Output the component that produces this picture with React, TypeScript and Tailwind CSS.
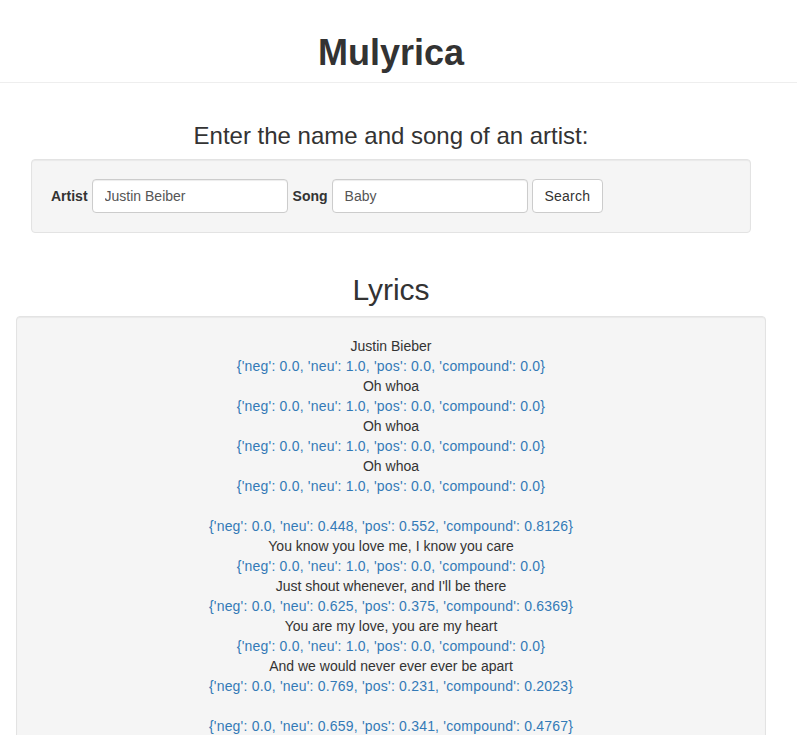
import React from 'react';

const lines: { text: string; score?: boolean }[] = [
  { text: 'Justin Bieber' },
  { text: "{'neg': 0.0, 'neu': 1.0, 'pos': 0.0, 'compound': 0.0}", score: true },
  { text: 'Oh whoa' },
  { text: "{'neg': 0.0, 'neu': 1.0, 'pos': 0.0, 'compound': 0.0}", score: true },
  { text: 'Oh whoa' },
  { text: "{'neg': 0.0, 'neu': 1.0, 'pos': 0.0, 'compound': 0.0}", score: true },
  { text: 'Oh whoa' },
  { text: "{'neg': 0.0, 'neu': 1.0, 'pos': 0.0, 'compound': 0.0}", score: true },
  { text: '' },
  { text: "{'neg': 0.0, 'neu': 0.448, 'pos': 0.552, 'compound': 0.8126}", score: true },
  { text: 'You know you love me, I know you care' },
  { text: "{'neg': 0.0, 'neu': 1.0, 'pos': 0.0, 'compound': 0.0}", score: true },
  { text: "Just shout whenever, and I'll be there" },
  { text: "{'neg': 0.0, 'neu': 0.625, 'pos': 0.375, 'compound': 0.6369}", score: true },
  { text: 'You are my love, you are my heart' },
  { text: "{'neg': 0.0, 'neu': 1.0, 'pos': 0.0, 'compound': 0.0}", score: true },
  { text: 'And we would never ever ever be apart' },
  { text: "{'neg': 0.0, 'neu': 0.769, 'pos': 0.231, 'compound': 0.2023}", score: true },
  { text: '' },
  { text: "{'neg': 0.0, 'neu': 0.659, 'pos': 0.341, 'compound': 0.4767}", score: true },
];

const inputCls =
  'w-[196px] h-[34px] px-[12px] border border-[#ccc] rounded-[4px] text-[#555] bg-white shadow-[inset_0_1px_1px_rgba(0,0,0,0.075)] outline-none';

export default function App() {
  return (
    <div className="min-h-screen bg-white text-[14px] leading-[20px] text-[#333] font-['Liberation_Sans',Arial,sans-serif]">
      <header className="pt-[33px] pb-[9px] border-b border-[#eee]">
        <div className="w-[782px]">
          <h1 className="text-center text-[36px] leading-[40px] font-bold">Mulyrica</h1>
        </div>
      </header>

      <div className="w-[782px]">
        <div className="w-[750px] mx-auto">
          <div className="px-[15px]">
            <h3 className="mt-[40px] mb-[10px] text-center text-[24px] leading-[26px]">
              Enter the name and song of an artist:
            </h3>
            <div className="mb-[20px] p-[19px] bg-[#f5f5f5] border border-[#e3e3e3] rounded-[4px] shadow-[inset_0_1px_1px_rgba(0,0,0,0.05)]">
              <form className="flex items-center gap-[4px]" onSubmit={(e) => e.preventDefault()}>
                <label className="font-bold">Artist</label>
                <input defaultValue="Justin Beiber" className={inputCls} />
                <label className="ml-[1px] font-bold">Song</label>
                <input defaultValue="Baby" className={inputCls} />
                <button className="h-[34px] px-[12px] border border-[#ccc] rounded-[4px] bg-white text-[#333] tracking-[0.2px]">
                  Search
                </button>
              </form>
            </div>
          </div>

          <h2 className="mt-[40px] mb-[10px] text-center text-[30px] leading-[33px]">Lyrics</h2>
          <div className="p-[19px] bg-[#f5f5f5] border border-[#e3e3e3] rounded-[4px] shadow-[inset_0_1px_1px_rgba(0,0,0,0.05)] text-center">
            {lines.map((l, i) =>
              l.text === '' ? (
                <div key={i} className="h-[20px]" />
              ) : (
                <div key={i} className={l.score ? 'text-[#337ab7] tracking-[0.2px]' : ''}>
                  {l.text}
                </div>
              )
            )}
          </div>
        </div>
      </div>
    </div>
  );
}
